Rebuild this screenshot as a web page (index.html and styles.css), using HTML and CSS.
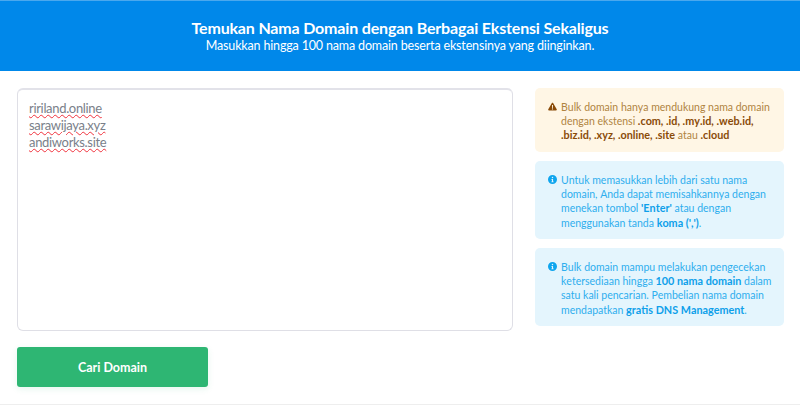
FILE: index.html
```html
<!DOCTYPE html>
<html lang="id">
<head>
<meta charset="utf-8">
<title>Bulk Domain</title>
<link rel="stylesheet" href="styles.css">
</head>
<body>
<header class="hero">
  <h1 class="hero-title">Temukan Nama Domain dengan Berbagai Ekstensi Sekaligus</h1>
  <p class="hero-sub">Masukkan hingga 100 nama domain beserta ekstensinya yang diinginkan.</p>
</header>
<main class="content">
  <section class="form-col">
    <div class="domain-input">
      <div class="line"><span class="misspelt">ririland.online</span></div>
      <div class="line"><span class="misspelt">sarawijaya.xyz</span></div>
      <div class="line"><span class="misspelt">andiworks.site</span></div>
    </div>
    <button class="search-btn" type="button">Cari Domain</button>
  </section>
  <aside class="notes">
    <div class="note note-warn">
      <svg class="note-icon" viewBox="0 0 16 16"><path fill="#8a4b08" fill-rule="evenodd" d="M8 1.2c.5 0 .9.3 1.100.7l6.400 11.200c.5.9-.1 1.900-1.100 1.900H1.600c-1 0-1.600-1-1.100-1.900L6.900 1.900c.2-.4.6-.7 1.100-.7zM7.100 5.500l.2 5h1.400l.2-5zM8 11.200a1.100 1.100 0 1 0 0 2.200 1.100 1.100 0 0 0 0-2.200z"/></svg>
      <p class="note-text">Bulk domain hanya mendukung nama domain dengan ekstensi <b>.com, .id, .my.id, .web.id, .biz.id, .xyz, .online, .site</b> atau <b>.cloud</b></p>
    </div>
    <div class="note note-info">
      <svg class="note-icon" viewBox="0 0 16 16"><path fill="#0ea5ee" fill-rule="evenodd" d="M8 0a8 8 0 1 1 0 16A8 8 0 0 1 8 0zM8 3a1.300 1.300 0 1 0 0 2.600A1.300 1.300 0 0 0 8 3zM6 7v1.300h1V11.500H6V13h4v-1.500H9V7z"/></svg>
      <p class="note-text">Untuk memasukkan lebih dari satu nama domain, Anda dapat memisahkannya dengan menekan tombol <b>'Enter'</b> atau dengan menggunakan tanda <b>koma (',')</b>.</p>
    </div>
    <div class="note note-info">
      <svg class="note-icon" viewBox="0 0 16 16"><path fill="#0ea5ee" fill-rule="evenodd" d="M8 0a8 8 0 1 1 0 16A8 8 0 0 1 8 0zM8 3a1.300 1.300 0 1 0 0 2.600A1.300 1.300 0 0 0 8 3zM6 7v1.300h1V11.500H6V13h4v-1.500H9V7z"/></svg>
      <p class="note-text">Bulk domain mampu melakukan pengecekan ketersediaan hingga <b>100 nama domain</b> dalam satu kali pencarian. Pembelian nama domain mendapatkan <b>gratis DNS Management</b>.</p>
    </div>
  </aside>
</main>
</body>
</html>
```
FILE: styles.css
```css
* { box-sizing: border-box; }
html, body { margin: 0; height: 405px; overflow: hidden; }
body {
  background: #fff;
  font-family: Lato, "Noto Sans", sans-serif;
  border-bottom: 1px solid #eeeeee;
}
.hero {
  height: 71px;
  background: #0088ea;
  border-top: 1px solid #4aa8ee;
  color: #fff;
  text-align: center;
  padding-top: 18px;
}
.hero-title {
  margin: 0;
  font-size: 16px;
  line-height: 18px;
  font-weight: 700;
  letter-spacing: -0.17px;
}
.hero-sub {
  margin: 0;
  font-size: 12.500px;
  line-height: 17px;
  letter-spacing: -0.16px;
}
.content {
  display: flex;
  gap: 22px;
  padding: 17px 16px 0 17px;
}
.form-col {
  width: 496px;
  display: flex;
  flex-direction: column;
  gap: 16px;
}
.domain-input {
  height: 243px;
  border: 1px solid #dfdfe6;
  border-top: 2px solid #e2e2e9;
  border-radius: 6px;
  padding: 10px 11px;
  color: #7a7f8a;
  font-size: 13px;
  line-height: 17px;
  letter-spacing: -0.33px;
}
.misspelt {
  text-decoration: underline wavy #f0323c 1px;
  text-underline-offset: 1px;
}
.search-btn {
  width: 191px;
  height: 40px;
  border: 0;
  border-radius: 3px;
  background: #2eb673;
  color: #fff;
  font-family: inherit;
  font-size: 12.500px;
  font-weight: 700;
  box-shadow: 0 2px 6px rgba(46, 182, 115, 0.12);
}
.notes {
  width: 249px;
  display: flex;
  flex-direction: column;
  gap: 9px;
}
.note {
  display: flex;
  gap: 4px;
  padding: 12px 8px 8px 13px;
  border-radius: 5px;
  font-size: 10.500px;
  line-height: 14.200px;
  font-kerning: none;
}
.note b { font-size: 10.800px; }
.note-icon {
  flex: none;
  width: 9px;
  height: 9px;
  margin-top: 2px;
}
.note-text { margin: 0; }
.note-warn { background: #fff6e5; color: #b0843f; height: 64px; }
.note-warn b { color: #8a4b08; }
.note-info { background: #e4f5fd; color: #2eaeee; height: 78px; }
.note-info b { color: #0ea0ea; }
```
